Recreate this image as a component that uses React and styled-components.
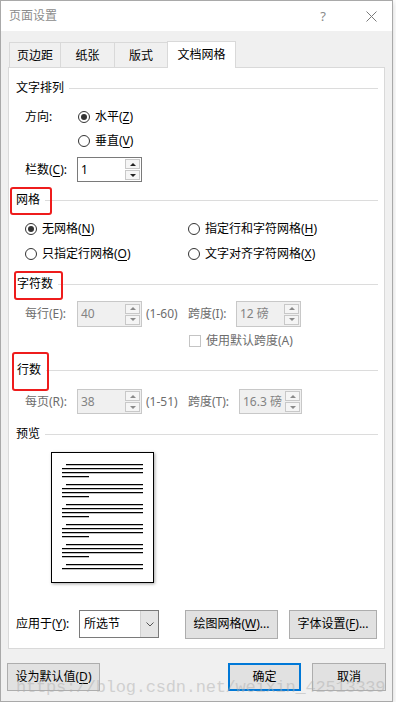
import styled, { createGlobalStyle } from 'styled-components'

const GlobalStyle = createGlobalStyle`
  body {
    margin: 0;
    background: #fff;
    font-family: "Noto Sans", "Noto Sans CJK SC", sans-serif;
    font-size: 12px;
    line-height: 16px;
    color: #000;
  }
  u { text-decoration-thickness: 1px; text-underline-offset: 2px; }
`

const Dialog = styled.div`
  width: 393px;
  height: 702px;
  box-sizing: border-box;
  border: 1px solid #a9a9a9;
  display: flex;
  flex-direction: column;
  box-shadow: 0 2px 6px rgba(0, 0, 0, 0.18);
  background: #f0f0f0;
`

const TitleBar = styled.div`
  height: 30px;
  background: #fff;
  display: flex;
  align-items: center;
  padding: 0 0 0 8px;
  color: #8c8c8c;
  font-size: 12px;
`

const TitleText = styled.div`
  flex: 1;
`

const Help = styled.div`
  width: 20px;
  text-align: center;
  color: #8a8a8a;
  font-size: 13px;
  margin-right: 23px;
`

const Close = styled.div`
  width: 30px;
  display: flex;
  justify-content: center;
  margin-right: 6px;
`

const Body = styled.div`
  flex: 1;
  padding: 0 7px;
  position: relative;
`

const Tabs = styled.div`
  margin-top: 9px;
  height: 27px;
  display: flex;
  align-items: flex-end;
  padding-left: 1px;
`

const Tab = styled.div`
  width: ${p => p.$w}px;
  height: ${p => (p.$active ? 27 : 25)}px;
  box-sizing: border-box;
  border: 1px solid #d9d9d9;
  border-bottom: none;
  background: ${p => (p.$active ? '#fff' : '#f0f0f0')};
  margin-right: -1px;
  margin-bottom: ${p => (p.$active ? -1 : 0)}px;
  position: relative;
  z-index: ${p => (p.$active ? 2 : 1)};
  display: flex;
  align-items: center;
  justify-content: center;
  padding-top: ${p => (p.$active ? 0 : 2)}px;
`

const Panel = styled.div`
  width: 377px;
  height: 582px;
  box-sizing: border-box;
  border: 1px solid #d9d9d9;
  background: #fff;
  padding: 10px 6px 0 7px;
  position: relative;
`

const Header = styled.div`
  display: flex;
  align-items: center;
  height: 20px;
  margin-top: ${p => p.$mt || 0}px;
`

const HeaderText = styled.span`
  position: relative;
  padding-left: ${p => p.$pl || 0}px;
`

const HeaderLine = styled.div`
  flex: 1;
  height: 1px;
  background: #dcdcdc;
  margin-left: 5px;
`

const RedBox = styled.div`
  position: absolute;
  left: ${p => p.$l}px;
  top: ${p => p.$t}px;
  width: ${p => p.$w}px;
  height: ${p => p.$h}px;
  box-sizing: border-box;
  border: 2px solid #ee1c1c;
  border-radius: 3px;
`

const Row = styled.div`
  display: flex;
  align-items: center;
  height: ${p => p.$h || 24}px;
  margin-top: ${p => p.$mt || 0}px;
  padding-left: ${p => p.$pl || 0}px;
`

const Label = styled.span`
  width: ${p => p.$w}px;
  flex-shrink: 0;
  color: ${p => (p.$disabled ? '#6d6d6d' : '#000')};
`

const Choice = styled.label`
  display: flex;
  align-items: center;
`

const RadioCircle = styled.span`
  width: 12px;
  height: 12px;
  box-sizing: border-box;
  border: 1px solid #333;
  border-radius: 50%;
  margin-right: 5px;
  display: flex;
  align-items: center;
  justify-content: center;
  &::after {
    content: '';
    width: 6px;
    height: 6px;
    border-radius: 50%;
    background: ${p => (p.$checked ? '#333' : 'transparent')};
  }
`

const CheckBox = styled.span`
  width: 12px;
  height: 12px;
  box-sizing: border-box;
  border: 1px solid #c4c4c4;
  margin-right: 5px;
`

const GridChoices = styled.div`
  display: grid;
  grid-template-columns: 163px 170px;
  padding-left: 9px;
  margin-top: 6px;
  grid-auto-rows: 25px;
  align-items: center;
`

const SpinBox = styled.div`
  width: ${p => p.$w}px;
  height: ${p => p.$h || 25}px;
  box-sizing: border-box;
  border: 1px solid ${p => (p.$disabled ? '#c8c8c8' : '#7a7a7a')};
  background: ${p => (p.$disabled ? '#f0f0f0' : '#fff')};
  color: ${p => (p.$disabled ? '#838383' : '#000')};
  display: flex;
  align-items: center;
  padding: 0 1px 0 3px;
  flex-shrink: 0;
`

const SpinValue = styled.span`
  flex: 1;
`

const SpinButtons = styled.div`
  width: 15px;
  display: flex;
  flex-direction: column;
  gap: 1px;
`

const SpinButton = styled.div`
  height: 10px;
  box-sizing: border-box;
  border: 1px solid #c8c8c8;
  background: #f5f5f5;
  display: flex;
  align-items: center;
  justify-content: center;
  &::after {
    content: '';
    border-left: 3px solid transparent;
    border-right: 3px solid transparent;
    ${p => (p.$down ? 'border-top' : 'border-bottom')}: 3px solid ${p => (p.$disabled ? '#8a8a8a' : '#222')};
  }
`

const Range = styled.span`
  width: ${p => p.$w}px;
  padding-left: 4px;
  box-sizing: border-box;
  color: #6d6d6d;
  flex-shrink: 0;
`

const CheckText = styled.span`
  color: #6d6d6d;
`

const Page = styled.div`
  margin: 8px 0 0 35px;
  width: 103px;
  height: 131px;
  box-sizing: border-box;
  border: 1px solid #000;
  box-shadow: 1px 1px 3px rgba(0, 0, 0, 0.35);
  padding: 11px 0 0 10px;
`

const TextLine = styled.div`
  height: 1px;
  background: #000;
  box-shadow: 0 0.5px 0 rgba(0, 0, 0, 0.5);
  width: ${p => p.$w}px;
  margin-left: ${p => p.$indent || 0}px;
  margin-bottom: 3px;
`

const LineGroup = styled.div`
  height: 20px;
`

const Select = styled.div`
  width: 80px;
  height: 28px;
  box-sizing: border-box;
  border: 1px solid #7a7a7a;
  display: flex;
  align-items: stretch;
  flex-shrink: 0;
`

const SelectValue = styled.span`
  flex: 1;
  padding-left: 4px;
  display: flex;
  align-items: center;
`

const SelectArrow = styled.span`
  width: 17px;
  background: #e5e5e5;
  border-left: 1px solid #d0d0d0;
  display: flex;
  align-items: center;
  justify-content: center;
`

const Button = styled.div`
  width: ${p => p.$w}px;
  height: ${p => p.$h || 28}px;
  box-sizing: border-box;
  border: ${p => (p.$primary ? '2px solid #0078d7' : '1px solid #adadad')};
  background: #e1e1e1;
  display: flex;
  align-items: center;
  justify-content: center;
  margin-left: ${p => p.$ml || 0}px;
  flex-shrink: 0;
`

const Footer = styled.div`
  margin-top: 14px;
  margin-left: -1px;
  margin-right: -1px;
  display: flex;
  height: 28px;
  position: relative;
`

const Spacer = styled.div`
  flex: 1;
`

const Watermark = styled.div`
  position: absolute;
  left: 9px;
  top: 16px;
  font-family: "Liberation Mono", monospace;
  font-size: 17px;
  line-height: 17px;
  letter-spacing: -0.22px;
  color: rgba(175, 175, 175, 0.5);
  white-space: nowrap;
  pointer-events: none;
`

const Spinner = ({ value, w, h, disabled }) => (
  <SpinBox $w={w} $h={h} $disabled={disabled}>
    <SpinValue>{value}</SpinValue>
    <SpinButtons>
      <SpinButton $disabled={disabled} />
      <SpinButton $down $disabled={disabled} />
    </SpinButtons>
  </SpinBox>
)

const Radio = ({ checked, children }) => (
  <Choice>
    <RadioCircle $checked={checked} />
    <span>{children}</span>
  </Choice>
)

const groups = [4, 4, 4, 4, 4, 2]

const Preview = () => (
  <Page>
    {groups.map((n, i) => (
      <LineGroup key={i}>
        <TextLine $w={77} $indent={4} />
        <TextLine $w={81} />
        {n > 2 && <TextLine $w={81} />}
        {n > 2 && <TextLine $w={27} />}
      </LineGroup>
    ))}
  </Page>
)

const App = () => {
  return (
    <>
      <GlobalStyle />
      <Dialog>
        <TitleBar>
          <TitleText>页面设置</TitleText>
          <Help>?</Help>
          <Close>
            <svg width="11" height="11" viewBox="0 0 11 11">
              <path d="M0.5 0.5 L10.5 10.5 M10.5 0.5 L0.5 10.5" stroke="#7a7a7a" strokeWidth="1" />
            </svg>
          </Close>
        </TitleBar>
        <Body>
          <Tabs>
            <Tab $w={52}>页边距</Tab>
            <Tab $w={55}>纸张</Tab>
            <Tab $w={54}>版式</Tab>
            <Tab $w={69} $active>文档网格</Tab>
          </Tabs>
          <Panel>
            <Header>
              <HeaderText>文字排列</HeaderText>
              <HeaderLine />
            </Header>
            <Row $mt={7} $pl={9}>
              <Label $w={53}>方向:</Label>
              <Radio checked>水平(<u>Z</u>)</Radio>
            </Row>
            <Row $pl={9}>
              <Label $w={53} />
              <Radio>垂直(<u>V</u>)</Radio>
            </Row>
            <Row $mt={4} $h={25} $pl={9}>
              <Label $w={52}>栏数(<u>C</u>):</Label>
              <Spinner value="1" w={65} />
            </Row>

            <Header $mt={8}>
              <HeaderText>
                网格
                <RedBox $l={-6} $t={-5} $w={42} $h={28} />
              </HeaderText>
              <HeaderLine />
            </Header>
            <GridChoices>
              <Radio checked>无网格(<u>N</u>)</Radio>
              <Radio>指定行和字符网格(<u>H</u>)</Radio>
              <Radio>只指定行网格(<u>O</u>)</Radio>
              <Radio>文字对齐字符网格(<u>X</u>)</Radio>
            </GridChoices>

            <Header $mt={8}>
              <HeaderText $pl={1}>
                字符数
                <RedBox $l={-2} $t={-5} $w={49} $h={29} />
              </HeaderText>
              <HeaderLine />
            </Header>
            <Row $mt={7} $h={26} $pl={9}>
              <Label $w={52} $disabled>每行(E):</Label>
              <Spinner value="40" w={65} h={26} disabled />
              <Range $w={46}>(1-60)</Range>
              <Label $w={48} $disabled>跨度(I):</Label>
              <Spinner value="12 磅" w={65} h={26} disabled />
            </Row>
            <Row $mt={4} $h={20} $pl={173}>
              <CheckBox />
              <CheckText>使用默认跨度(A)</CheckText>
            </Row>

            <Header $mt={9}>
              <HeaderText $pl={1}>
                行数
                <RedBox $l={-4} $t={-10} $w={37} $h={39} />
              </HeaderText>
              <HeaderLine />
            </Header>
            <Row $mt={9} $h={25} $pl={9}>
              <Label $w={52} $disabled>每页(R):</Label>
              <Spinner value="38" w={65} disabled />
              <Range $w={46}>(1-51)</Range>
              <Label $w={51} $disabled>跨度(T):</Label>
              <Spinner value="16.3 磅" w={63} disabled />
            </Row>

            <Header $mt={10}>
              <HeaderText>预览</HeaderText>
              <HeaderLine />
            </Header>
            <Preview />

            <Row $mt={27} $h={28}>
              <Label $w={63}>应用于(<u>Y</u>):</Label>
              <Select>
                <SelectValue>所选节</SelectValue>
                <SelectArrow>
                  <svg width="8" height="5" viewBox="0 0 8 5">
                    <path d="M0.5 0.5 L4 4 L7.5 0.5" stroke="#555" strokeWidth="1" fill="none" />
                  </svg>
                </SelectArrow>
              </Select>
              <Button $w={93} $h={29} $ml={26}>绘图网格(<u>W</u>)...</Button>
              <Button $w={88} $h={29} $ml={11}>字体设置(<u>F</u>)...</Button>
            </Row>
          </Panel>
          <Footer>
            <Button $w={93}>设为默认值(<u>D</u>)</Button>
            <Spacer />
            <Button $w={73} $primary>确定</Button>
            <Button $w={74} $ml={11}>取消</Button>
            <Watermark>https://blog.csdn.net/weixin_42513339</Watermark>
          </Footer>
        </Body>
      </Dialog>
    </>
  )
}

export default App
